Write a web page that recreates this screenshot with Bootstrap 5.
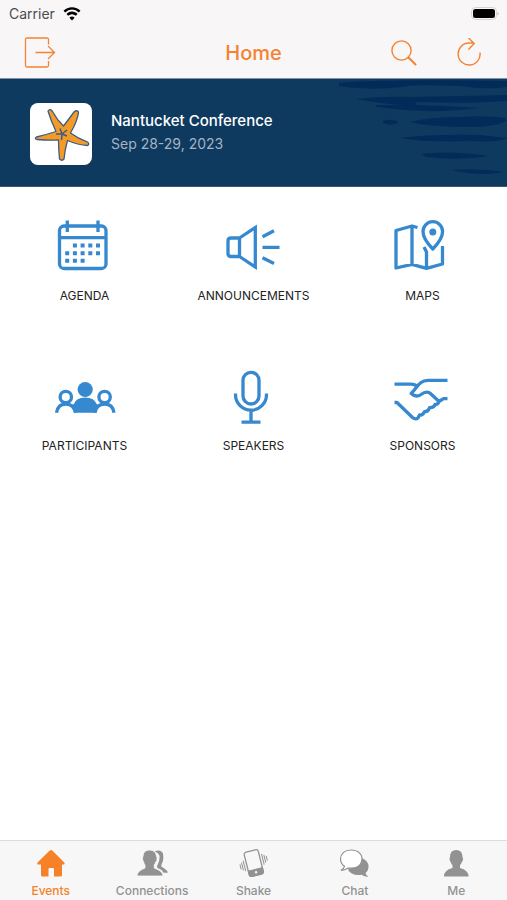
<!DOCTYPE html>
<html lang="en">
<head>
<meta charset="utf-8">
<meta name="viewport" content="width=device-width, initial-scale=1">
<title>Home</title>
<link href="https://cdn.jsdelivr.net/npm/bootstrap@5.3.0/dist/css/bootstrap.min.css" rel="stylesheet">
<style>
  body { font-family: Inter, "Liberation Sans", sans-serif; color: #222; background: #fff; }
  svg { display: block; flex: none; }
  .top-area { background: #f8f6f7; }
  .status-row { height: 28px; font-size: 14px; line-height: 20px; color: #4c4c4c; padding-left: 9px; }
  .title-row { height: 50px; color: #f58233; }
  .title-row h1 { font-size: 20px; line-height: 24px; font-weight: 500; }
  .icon-btn { color: #f58233; line-height: 0; }
  .head-actions { gap: 36px; }
  .banner { background: #0e3a5f; height: 109px; border-top: 1px solid #7d93a9; border-bottom: 1px solid #38597a; padding-left: 30px; padding-top: 2px; }
  .waves { top: 0; right: 0; height: 107px; }
  .event-row { gap: 19px; }
  .event-text { padding-bottom: 3px; }
  .logo-box { width: 62px; height: 62px; border-radius: 8px; }
  .event-name { font-size: 15px; line-height: 23px; font-weight: 500; color: #fff; }
  .event-date { font-size: 14px; line-height: 23px; color: #a5b3c2; }
  .tile { height: 150px; padding-top: 27px; gap: 9px; color: #222; font-size: 12px; line-height: 18px; }
  .tile svg { color: #3688cf; }
  .tabs { background: #f7f7f7; border-top: 1px solid #dcdcdc; height: 60px; }
  .tab { color: #929292; font-size: 12px; line-height: 16px; font-weight: 500; padding-top: 7px; }
  .tab.active { color: #f58228; }
</style>
<script src="https://cdn.jsdelivr.net/npm/bootstrap@5.3.0/dist/js/bootstrap.bundle.min.js"></script>
</head>
<body class="d-flex flex-column min-vh-100">
<header class="top-area">
  <div class="status-row d-flex align-items-center pe-2">
    <span class="me-2">Carrier</span>
    <svg width="18" height="14" viewBox="0 0 18 14" fill="#000"><path d="M9 13.500l2.600-2.700a3.700 3.700 0 0 0-5.200 0zM9 4.600c2.100 0 4.100.9 5.500 2.300l-1.700 1.800a5.500 5.500 0 0 0-7.600 0L3.500 6.900A7.700 7.700 0 0 1 9 4.600zM9 .2c3.300 0 6.300 1.300 8.500 3.500l-1.700 1.700a9.700 9.700 0 0 0-13.600 0L.5 3.700A12 12 0 0 1 9 .2z"/></svg>
    <svg class="ms-auto" width="28" height="14" viewBox="0 0 28 14"><rect x=".5" y=".5" width="25" height="12" rx="4" fill="#f8f6f7" stroke="#d5d3d4"/><rect x="2" y="2" width="22" height="9" rx="2.500" fill="#000"/><path d="M26.700 5v3.500q2-1.700 0-3.500z" fill="#aaa"/></svg>
  </div>
  <div class="title-row row g-0 align-items-center">
    <div class="col-4 ps-4"><button class="icon-btn btn p-0 border-0" type="button" aria-label="Exit">
      <svg width="32" height="32" viewBox="0 0 32 32" fill="none" stroke="currentColor" stroke-width="1.300"><path d="M24.500 7.500V2.500q0-1.500-1.500-1.500H3Q1.500 1 1.500 2.500v26Q1.500 30 3 30h20q1.500 0 1.500-1.500v-4.500M11.500 15.500h19M24 9l6.500 6.500L24 22"/></svg></button></div>
    <h1 class="col-4 text-center m-0">Home</h1>
    <div class="head-actions col-4 d-flex justify-content-end pe-4">
      <button class="icon-btn btn p-0 border-0" type="button" aria-label="Search"><svg width="30" height="30" viewBox="0 0 30 30" fill="none" stroke="currentColor" stroke-linecap="round"><circle cx="12.500" cy="12.500" r="9.600" stroke-width="1.400"/><path d="M19.500 19.500l7 7" stroke-width="2"/></svg></button>
      <button class="icon-btn btn p-0 border-0" type="button" aria-label="Refresh"><svg width="28" height="30" viewBox="0 0 28 30" fill="none" stroke="currentColor" stroke-width="1.400"><path d="M25 14.500A11 11 0 1 1 14 5h5M13.500 0l5.700 5.500-5.700 6"/></svg></button>
    </div>
  </div>
</header>
<section class="banner position-relative d-flex align-items-center">
  <svg class="waves position-absolute" width="187" height="107" viewBox="0 0 187 107" fill="#032b59"><path d="M19 4Q60 0 187 2v6Q170 11 140 7Q90 5 82 8Q50 12 19 7zM37 20Q60 17 90 18L187 16v6Q150 25 96 23l1 3Q130 27 160 29Q120 34 84 31L56 28V26L80 26Q50 23 37 20zM63 42q8-3 16 1q-8 5-16 1zM90 43Q110 38 140 38Q165 36 185 39l1 3Q175 48 150 48Q110 48 90 43zM80 59Q110 55 160 56L187 59Q180 64 150 62Q110 64 80 59zM101 75q30-4 68 2q-30 5-63 1zM132 91Q160 89 184 93Q160 98 132 91z"/></svg>
  <div class="event-row d-flex align-items-center position-relative">
    <div class="logo-box bg-white">
      <svg width="62" height="62" viewBox="0 0 62 62" stroke="#3d5c86" stroke-linejoin="round"><path d="M18 8Q20 5 22.500 8.500Q27 17 33.500 23Q39 16 44 9Q47 6.500 48.500 9Q48 17 40.500 30Q48 35.500 57.500 39Q60 41 57.500 42.500Q48 42 37.500 37.500Q35 46 34 56Q32 58.500 29.500 56Q28.500 46 28.500 37Q18 37.500 7 36.500Q4 35.500 6.500 34Q15 32 26 28.500Q21 18 18 8z" fill="#f39b26" stroke-width="1.300"/><path d="M32 31L30 25.500M32 31l5-4M32 31l5 2M32 31l-.5 6M32 31l-6 0" fill="none" stroke-width="1.500"/></svg>
    </div>
    <div class="event-text"><div class="event-name">Nantucket Conference</div><div class="event-date">Sep 28-29, 2023</div></div>
  </div>
</section>
<main class="flex-grow-1">
  <div class="row g-0">
    <a href="#" class="tile col-4 d-flex flex-column align-items-center text-decoration-none">
      <svg width="64" height="64" viewBox="1 0 64 64" fill="none" stroke="currentColor" stroke-width="3.300"><rect x="7.500" y="12" width="46.500" height="42.500" rx="4.500"/><path d="M7.500 23.700H54M15.300 6.500v11.500M46 6.500v11.500"/><path stroke-width="4" stroke-dasharray="4 3.700" d="M20.900 31.500h27.100M13.200 39.200h34.800M13.200 46.800h19.400"/></svg>
      <span>AGENDA</span></a>
    <a href="#" class="tile col-4 d-flex flex-column align-items-center text-decoration-none">
      <svg width="64" height="64" viewBox="1 0 64 64" fill="none" stroke="currentColor" stroke-width="3.300"><path d="M18.500 24H10q-3 0-3 3v12.500q0 3 3 3h8.500zM18.500 24L34.300 13.500v39.500L18.500 42.500M41.500 22.700l11.500-6M41.500 33.300h17M41.500 43.700l11.500 5.800"/></svg>
      <span>ANNOUNCEMENTS</span></a>
    <a href="#" class="tile col-4 d-flex flex-column align-items-center text-decoration-none">
      <svg width="64" height="64" viewBox="1 0 64 64" fill="none" stroke="currentColor" stroke-width="3.300" stroke-linejoin="round"><path d="M27.500 13.500L22 12 6 16.500v37.500L22 50.300l14.500 4 16-4.300V32M22 12v38.300M36.500 54.300V38l-2.500-5"/><path d="M42.800 35Q33 25 33 17.500a9.800 9.800 0 0 1 19.600 0Q52.600 25 42.800 35z"/><circle cx="42.800" cy="18" r="3.500" fill="currentColor" stroke="none"/></svg>
      <span>MAPS</span></a>
    <a href="#" class="tile col-4 d-flex flex-column align-items-center text-decoration-none">
      <svg width="64" height="64" viewBox="0 0 64 64" fill="none" stroke="currentColor" stroke-width="3.300"><circle cx="32.200" cy="25.500" r="7.600" fill="currentColor" stroke="none"/><path d="M21 48.700Q20.500 43 18.500 40.500H20.500Q23 33.500 32.200 33.500T44 40.500H46Q44 43 43.500 48.700z" fill="currentColor" stroke="none"/><circle cx="12.800" cy="33" r="5.700"/><circle cx="51.600" cy="33" r="5.700"/><path d="M3.500 48.700Q5 40 12.800 40T22.500 48.700M42 48.700Q43.500 40 51.600 40T61 48.700"/></svg>
      <span>PARTICIPANTS</span></a>
    <a href="#" class="tile col-4 d-flex flex-column align-items-center text-decoration-none">
      <svg width="64" height="64" viewBox="1 0 64 64" fill="none" stroke="currentColor" stroke-width="3.300"><rect x="22" y="8.300" width="16" height="31.700" rx="8"/><path d="M14.500 29.500v1.200a15.500 15.500 0 0 0 31 0v-1.200M30 46v12M20.500 58.200h19"/></svg>
      <span>SPEAKERS</span></a>
    <a href="#" class="tile col-4 d-flex flex-column align-items-center text-decoration-none">
      <svg width="64" height="64" viewBox="1 0 64 64" fill="none" stroke="currentColor" stroke-width="3.300" stroke-linejoin="round"><path d="M4.500 20.200H21q4 0 6 2.300M57.500 16.300H38C29 16.300 27 24 21.200 29.500Q26 34 31 30.500 37 26 41 30L49 37.500l4.500-2.800h4M4.500 38.500H7L22.500 53.500q3 2.500 5.500 .5l1.500-3q3.500 .5 5-3.300 4 .3 5-4 4.500 .2 5.500-3.200 3 .5 4-3.300"/></svg>
      <span>SPONSORS</span></a>
  </div>
</main>
<nav class="tabs sticky-bottom d-flex text-center" aria-label="Sections">
  <a href="#" class="tab active flex-fill w-100 d-flex flex-column align-items-center gap-1 text-decoration-none" aria-current="page">
    <svg width="32" height="31" viewBox="0 0 32 31" fill="currentColor"><path d="M14.700 2.500q1.300-1.200 2.600 0l12 12q1 2-1 2H27v10.500q0 1.500-1.500 1.500H19v-7.500q0-1-1-1h-3.500q-1 0-1 1v7.500h-6Q6 28.500 6 27V16.500H3.500q-2 0-1-2z"/></svg><span>Events</span></a>
  <a href="#" class="tab flex-fill w-100 d-flex flex-column align-items-center gap-1 text-decoration-none">
    <svg width="32" height="31" viewBox="0 0 32 31" fill="currentColor"><path d="M18.500 3.500q6-3 8.500 2 .8 4-.2 8-1.800 3-1.600 5 5.500 3 6.500 5.500v.8h-4q-2-3.500-6.500-5-.6-1.500.4-3 2-3 2-8 0-3.500-5.100-5.300z"/><path d="M6 8Q6.500 2 12.500 2T19.500 8q1 1 .3 4.500-.6 1-1.100 1.500-.5 2-1.500 3v3Q26 23 26 28H0q0-5 8-8v-3q-1-1-1.500-3.500Q5.500 13 5.500 10z" transform="translate(1 0)" stroke="#f7f7f7" stroke-width=".8"/></svg><span>Connections</span></a>
  <a href="#" class="tab flex-fill w-100 d-flex flex-column align-items-center gap-1 text-decoration-none">
    <svg width="32" height="31" viewBox="0 0 32 31" fill="none" stroke="currentColor" stroke-width="1"><g transform="rotate(-14 16 15)"><rect x="8.500" y="2.500" width="14.500" height="25" rx="2.500" stroke-width="1.300"/><path d="M8.500 21.500H23v4q0 2-2 2H10.500q-2 0-2-2z" fill="currentColor"/><circle cx="15.800" cy="24.500" r="1.200" fill="#f7f7f7" stroke="none"/><path d="M6 10v11M4 11.500v8M2 13v5M25.500 8v11M27.500 9.500v8M29.500 11v5"/></g></svg><span>Shake</span></a>
  <a href="#" class="tab flex-fill w-100 d-flex flex-column align-items-center gap-1 text-decoration-none">
    <svg width="32" height="31" viewBox="1 0 32 31"><path d="M22 9.500Q30.500 12 30.500 18.500q0 4-3 6.500 .5 2.500 3 3.800-4 .2-7-2Q13 28 10 21.500z" fill="currentColor"/><path d="M13 2C6.500 2 2.500 6 2.500 11q0 4.500 4 7.300-.7 2.700-3.500 4 4 0 7-2.300 13 1.500 14-9C24 6 20 2 13 2z" fill="#fff" stroke="currentColor" stroke-width="1.200"/></svg><span>Chat</span></a>
  <a href="#" class="tab flex-fill w-100 d-flex flex-column align-items-center gap-1 text-decoration-none">
    <svg width="32" height="31" viewBox="0 0 32 31" fill="currentColor"><path d="M10 9Q10 2 16.200 2T22.500 9q1 1 .3 3.500-.5 1.200-1 1.500-.5 2-1.800 3.200V20Q28.500 22 28.500 28.500H4Q4 22 12.500 20v-2.800Q11 16 10.700 14 9.500 13 9.500 10z"/></svg><span>Me</span></a>
</nav>
</body>
</html>
